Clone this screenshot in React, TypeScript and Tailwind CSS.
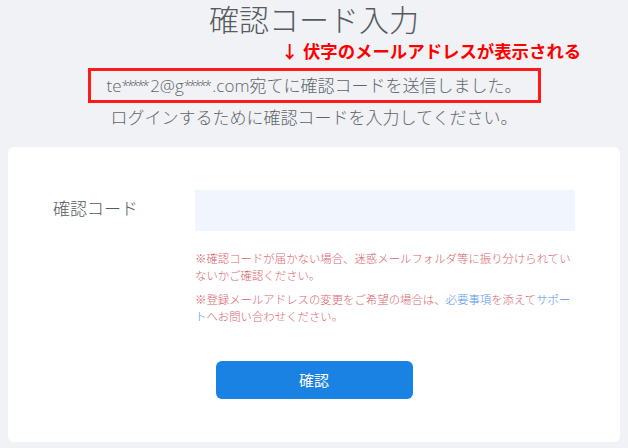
const FONT = { fontFamily: '"Open Sans", "Noto Sans CJK JP", sans-serif' };

function Stars() {
  return <span className="text-[14px] tracking-[-2.6px] pr-[3px] align-top leading-[24px]">*****</span>;
}

export default function App() {
  return (
    <div className="h-[448px] w-[628px] bg-[#f0f2f5] overflow-hidden" style={FONT}>
      {/* Heading */}
      <div className="pt-[1px] text-center">
        <h1 className="text-[30px] leading-[38px] text-[#555b61] font-light">確認コード入力</h1>
      </div>

      {/* Annotation */}
      <div className="pl-[281px] text-[17.4px] leading-[24px] font-bold text-[#ff0000] whitespace-nowrap">
        ↓ 伏字のメールアドレスが表示される
      </div>

      <div className="flex justify-center mt-[5px]">
        <div className="w-[453px] h-[35px] border-[3px] border-[#ff1a1a] flex items-center justify-center">
          <p className="text-[17px] leading-[24px] text-[#5f656b] font-light whitespace-nowrap">
            te<Stars />2@g<Stars />.com宛てに確認コードを送信しました。
          </p>
        </div>
      </div>
      <p className="text-center text-[17px] leading-[24px] text-[#5f656b] font-light mt-[3px]">
        ログインするために確認コードを入力してください。
      </p>

      {/* Card */}
      <div className="mx-[8px] mt-[17px] h-[295px] bg-white rounded-[6px] px-[45px] pt-[43px]">
        <div className="flex">
          <label className="w-[142px] text-[17px] leading-[38px] text-[#555b61] font-light">確認コード</label>
          <div className="flex-1">
            <input className="w-full h-[41px] bg-[#f1f6fe] outline-none px-3 text-[15px]" />
            <div className="mt-[19px] text-[11.4px] leading-[17px] text-[#d9656e] font-light">
              <p>※確認コードが届かない場合、迷惑メールフォルダ等に振り分けられていないかご確認ください。</p>
              <p className="mt-[7px]">
                ※登録メールアドレスの変更をご希望の場合は、
                <span className="text-[#5b95ea]">必要事項</span>を添えて
                <span className="text-[#5b95ea]">サポート</span>へお問い合わせください。
              </p>
            </div>
          </div>
        </div>
        <div className="flex justify-center mt-[36px]">
          <button className="w-[197px] h-[38px] rounded-[6px] bg-[#1a82e2] text-white text-[15px]">確認</button>
        </div>
      </div>
    </div>
  );
}
